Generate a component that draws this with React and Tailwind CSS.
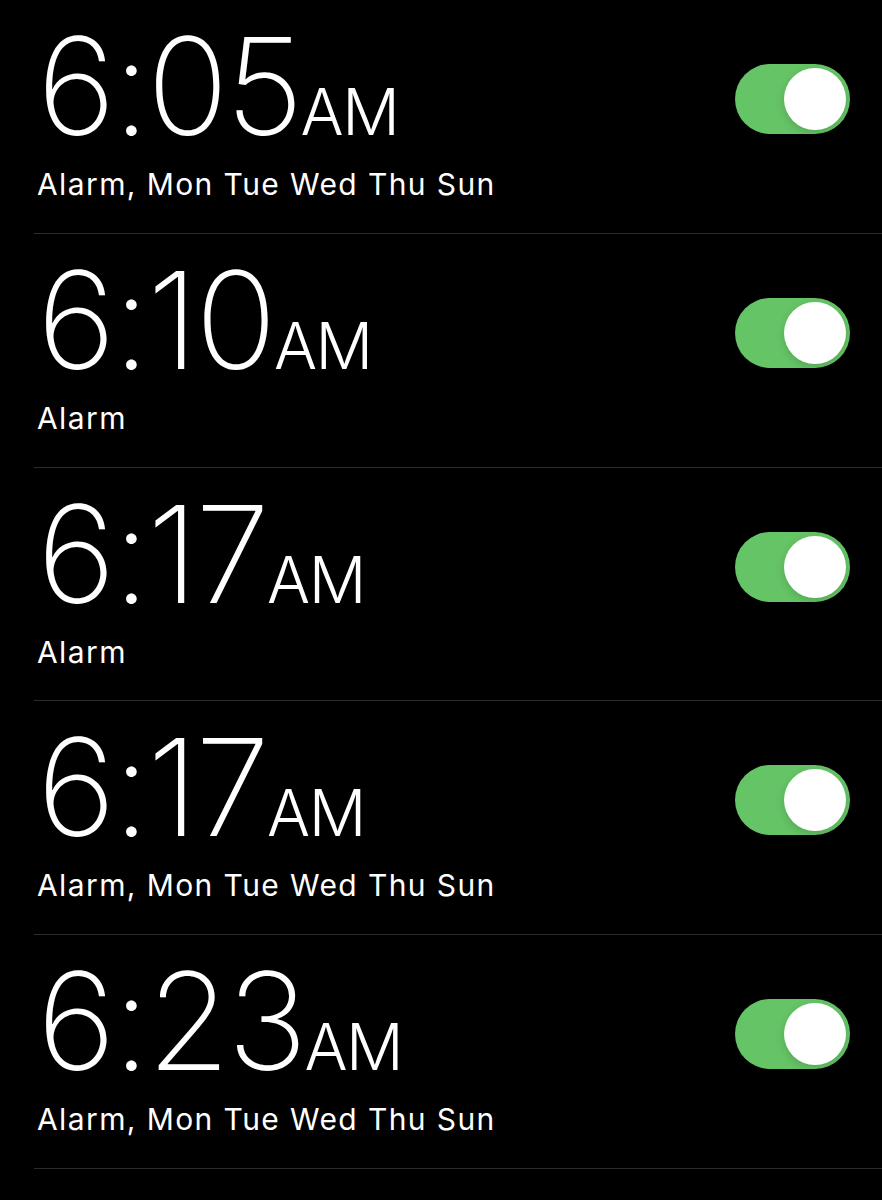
import React, { useState } from 'react';

const alarms = [
  { id: 1, time: '6:05', label: 'Alarm, Mon Tue Wed Thu Sun' },
  { id: 2, time: '6:10', label: 'Alarm' },
  { id: 3, time: '6:17', label: 'Alarm' },
  { id: 4, time: '6:17', label: 'Alarm, Mon Tue Wed Thu Sun' },
  { id: 5, time: '6:23', label: 'Alarm, Mon Tue Wed Thu Sun' },
];

function Toggle({ on, onChange }) {
  return (
    <button
      onClick={onChange}
      className={`relative h-[70px] w-[115px] shrink-0 rounded-full transition-colors ${
        on ? 'bg-[#65c466]' : 'bg-[#39393d]'
      }`}
    >
      <span
        className={`absolute top-[4px] h-[62px] w-[62px] rounded-full bg-white shadow-[0_3px_8px_rgba(0,0,0,0.15)] transition-all ${
          on ? 'left-[49px]' : 'left-[4px]'
        }`}
      />
    </button>
  );
}

export default function App() {
  const [enabled, setEnabled] = useState(alarms.map(() => true));

  return (
    <div
      className="min-h-screen w-full bg-black text-white"
      style={{ fontFamily: 'Inter, "Noto Sans", sans-serif' }}
    >
      {alarms.map((a, i) => (
        <div
          key={a.id}
          className="ml-[34px] flex h-[233.75px] items-start justify-between border-b border-[#2b2b2d] pl-[3px] pr-[32px]"
        >
          <div className="pt-[19px]">
            <div className="flex items-baseline leading-none">
              <span className="text-[135px] font-extralight tracking-[-3px]">{a.time}</span>
              <span className="text-[64px] font-light tracking-[-1.5px]">AM</span>
            </div>
            <div className="mt-[12px] text-[30px] leading-[36px] tracking-[1.4px]">{a.label}</div>
          </div>
          <div className="mt-[64px]">
            <Toggle
              on={enabled[i]}
              onChange={() => setEnabled(enabled.map((v, j) => (j === i ? !v : v)))}
            />
          </div>
        </div>
      ))}
    </div>
  );
}
